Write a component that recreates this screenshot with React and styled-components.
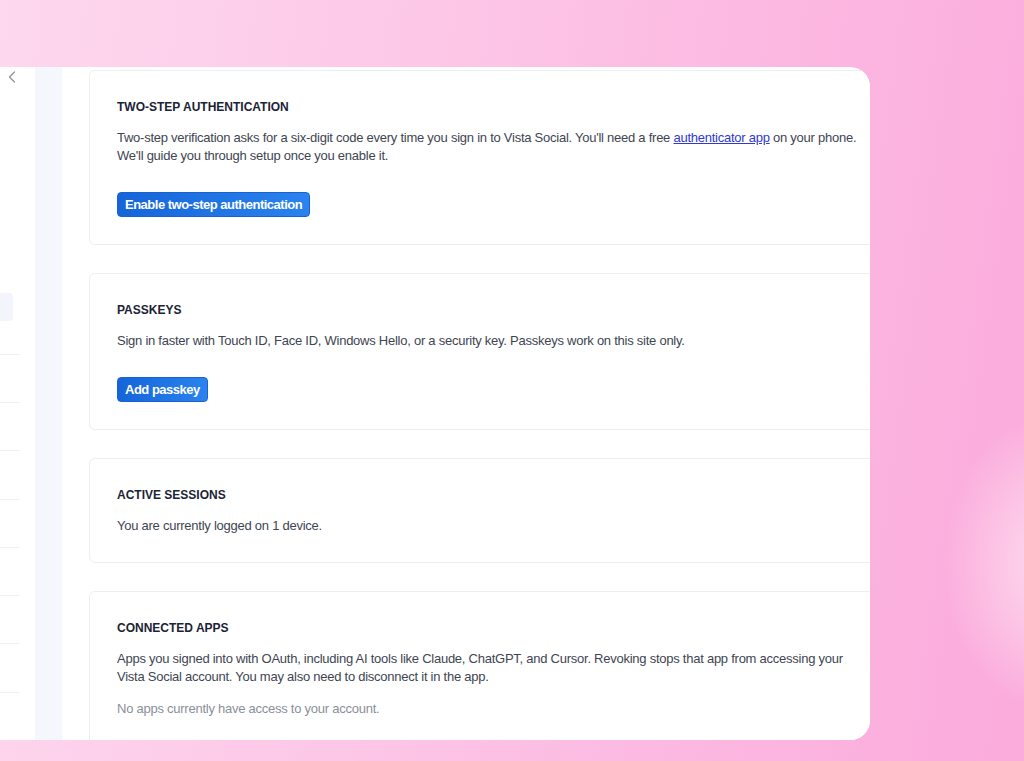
import React from "react";
import styled, { createGlobalStyle } from "styled-components";

const GlobalStyle = createGlobalStyle`
  html, body {
    margin: 0;
    padding: 0;
    height: 100%;
    overflow: hidden;
  }
  body {
    font-family: "Liberation Sans", Arial, "Noto Sans", sans-serif;
    -webkit-font-smoothing: antialiased;
  }
  * { box-sizing: border-box; }
`;

const Backdrop = styled.div`
  width: 100vw;
  height: 100vh;
  padding-top: 67px;
  background:
    radial-gradient(ellipse 110px 150px at 103% 74%, rgba(254, 226, 242, 0.9) 0, rgba(253, 214, 236, 0.55) 55%, rgba(252, 190, 228, 0) 100%),
    linear-gradient(98deg, #fdd8ee 0%, #fdc9e8 35%, #fcbae2 65%, #fbabdc 100%);
`;

const AppWindow = styled.div`
  margin-left: -220px;
  width: 1090px;
  height: 673px;
  background: #ffffff;
  border-radius: 0 20px 20px 0;
  overflow: hidden;
  display: flex;
`;

const Sidebar = styled.aside`
  width: 255px;
  flex: none;
  display: flex;
  flex-direction: column;
  background: #ffffff;
`;

const SidebarHeader = styled.div`
  height: 17px;
  display: flex;
  align-items: flex-end;
  justify-content: flex-end;
  padding-right: 19px;
  color: #8c919b;
`;

const CollapseButton = styled.button`
  border: 0;
  background: none;
  padding: 0;
  color: inherit;
  display: flex;
  cursor: pointer;
`;

const NavGroup = styled.nav`
  display: flex;
  flex-direction: column;
  padding-right: 15px;
`;

const ActiveItem = styled.div`
  margin-top: 210px;
  margin-right: 7px;
  height: 28px;
  border-radius: 0 4px 4px 0;
  background: #f2f5fb;
`;

const NavRow = styled.div`
  height: 48.3px;
  border-top: 1px solid #eef0f3;
  margin-top: ${(p) => (p.$first ? "33px" : "0")};
`;

const Gutter = styled.div`
  width: 27px;
  flex: none;
  background: #f4f7fc;
`;

const Main = styled.main`
  flex: 1;
  padding: 3px 0 0 27px;
  display: flex;
  flex-direction: column;
  gap: 28px;
`;

const Card = styled.section`
  width: 800px;
  flex: none;
  border: 1px solid #eceef1;
  border-radius: 6px;
  padding: 27.5px 27px 27px;
  background: #ffffff;
`;

const CardTitle = styled.h2`
  margin: 0 0 14.5px;
  font-size: 12px;
  line-height: 16px;
  font-weight: 700;
  letter-spacing: 0;
  text-transform: uppercase;
  color: #1b2336;
`;

const Text = styled.p`
  margin: ${(p) => (p.$spaced ? "13.5px 0 0" : "0")};
  font-size: 13px;
  line-height: 18px;
  letter-spacing: -0.25px;
  color: ${(p) => (p.$muted ? "#8a8f99" : "#3e4552")};
  max-width: 746px;
`;

const Link = styled.a`
  color: #2f39d4;
  text-decoration: underline;
`;

const PrimaryButton = styled.button`
  margin-top: 27px;
  height: 25px;
  padding: 0 7px;
  border: 1px solid #1862d2;
  border-radius: 4px;
  background: linear-gradient(90deg, #1565d9 0%, #2a83ee 100%);
  color: #ffffff;
  font-family: inherit;
  font-size: 13px;
  font-weight: 700;
  letter-spacing: -0.5px;
  line-height: 23px;
  cursor: pointer;
`;

const Chevron = () => (
  <svg width="8" height="12" viewBox="0 0 8 12" fill="none">
    <path d="M6.5 1 L1.5 6 L6.5 11" stroke="currentColor" strokeWidth="1.2" strokeLinecap="round" strokeLinejoin="round" />
  </svg>
);

const navItems = ["Notifications", "Billing", "Team", "Integrations", "API", "Branding", "Referrals", "Help"];

export default function App() {
  return (
    <>
      <GlobalStyle />
      <Backdrop>
        <AppWindow>
          <Sidebar>
            <SidebarHeader>
              <CollapseButton aria-label="Collapse sidebar">
                <Chevron />
              </CollapseButton>
            </SidebarHeader>
            <NavGroup>
              <ActiveItem aria-label="Security" aria-current="page" />
              {navItems.map((item, i) => (
                <NavRow key={item} $first={i === 0} aria-label={item} />
              ))}
            </NavGroup>
          </Sidebar>
          <Gutter />
          <Main>
            <Card>
              <CardTitle>Two-step authentication</CardTitle>
              <Text>
                Two-step verification asks for a six-digit code every time you sign in to Vista Social. You'll need a
                free <Link href="#">authenticator app</Link> on your phone. We'll guide you through setup once you
                enable it.
              </Text>
              <PrimaryButton>Enable two-step authentication</PrimaryButton>
            </Card>
            <Card>
              <CardTitle>Passkeys</CardTitle>
              <Text>
                Sign in faster with Touch ID, Face ID, Windows Hello, or a security key. Passkeys work on this site only.
              </Text>
              <PrimaryButton>Add passkey</PrimaryButton>
            </Card>
            <Card>
              <CardTitle>Active sessions</CardTitle>
              <Text>You are currently logged on 1 device.</Text>
            </Card>
            <Card>
              <CardTitle>Connected apps</CardTitle>
              <Text>
                Apps you signed into with OAuth, including AI tools like Claude, ChatGPT, and Cursor. Revoking stops that
                app from accessing your Vista Social account. You may also need to disconnect it in the app.
              </Text>
              <Text $muted $spaced>
                No apps currently have access to your account.
              </Text>
            </Card>
          </Main>
        </AppWindow>
      </Backdrop>
    </>
  );
}
